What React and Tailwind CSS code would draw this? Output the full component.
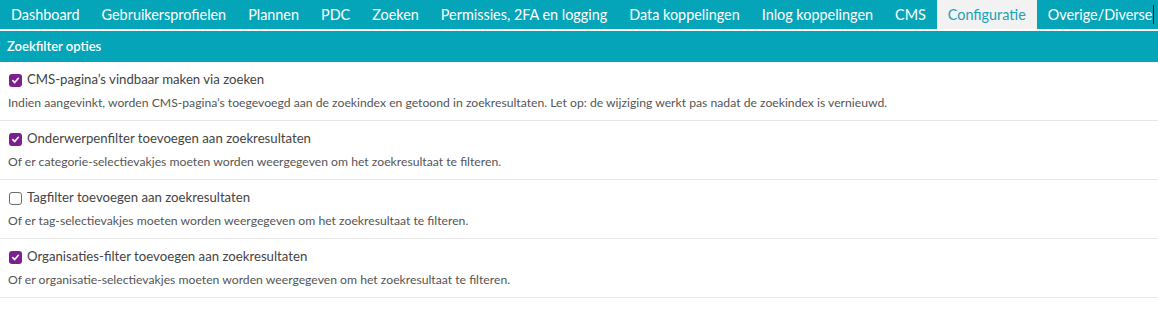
import React, { useState } from "react";

const tabs = [
  "Dashboard",
  "Gebruikersprofielen",
  "Plannen",
  "PDC",
  "Zoeken",
  "Permissies, 2FA en logging",
  "Data koppelingen",
  "Inlog koppelingen",
  "CMS",
  "Configuratie",
  "Overige/Diverse",
];

const options = [
  {
    id: "cms",
    title: "CMS-pagina’s vindbaar maken via zoeken",
    help: "Indien aangevinkt, worden CMS-pagina’s toegevoegd aan de zoekindex en getoond in zoekresultaten. Let op: de wijziging werkt pas nadat de zoekindex is vernieuwd.",
    checked: true,
  },
  {
    id: "subject",
    title: "Onderwerpenfilter toevoegen aan zoekresultaten",
    help: "Of er categorie-selectievakjes moeten worden weergegeven om het zoekresultaat te filteren.",
    checked: true,
  },
  {
    id: "tag",
    title: "Tagfilter toevoegen aan zoekresultaten",
    help: "Of er tag-selectievakjes moeten worden weergegeven om het zoekresultaat te filteren.",
    checked: false,
  },
  {
    id: "org",
    title: "Organisaties-filter toevoegen aan zoekresultaten",
    help: "Of er organisatie-selectievakjes moeten worden weergegeven om het zoekresultaat te filteren.",
    checked: true,
  },
];

function Checkbox({ checked, onChange }) {
  return (
    <button
      type="button"
      onClick={onChange}
      className={`w-[13px] h-[13px] rounded-[3px] flex items-center justify-center shrink-0 ${
        checked ? "bg-[#7d1f8e]" : "bg-white border border-[#6b6b6b]"
      }`}
    >
      {checked && (
        <svg width="9" height="9" viewBox="0 0 10 10">
          <path
            d="M2 5.2 L4.1 7.3 L8.2 2.6"
            fill="none"
            stroke="white"
            strokeWidth="1.8"
            strokeLinecap="round"
            strokeLinejoin="round"
          />
        </svg>
      )}
    </button>
  );
}

export default function App() {
  const [values, setValues] = useState(
    Object.fromEntries(options.map((o) => [o.id, o.checked]))
  );

  return (
    <div
      className="w-[1158px] h-[318px] overflow-hidden bg-white"
      style={{ fontFamily: "Lato, 'Open Sans', sans-serif" }}
    >
      {/* Tabs */}
      <div className="flex h-[29px] bg-[#05a5b9]">
        {tabs.map((t) => {
          const active = t === "Configuratie";
          return (
            <div
              key={t}
              className={`px-[11px] flex items-center text-[14.4px] whitespace-nowrap ${
                active ? "bg-[#f2f2f2] text-[#1aa3b5]" : "text-white"
              }`}
            >
              {t}
              {t === "Overige/Diverse" && (
                <span className="w-px h-[19px] bg-[#0b2b30] ml-px" />
              )}
            </div>
          );
        })}
      </div>
      <div className="h-[2px] bg-white" />

      {/* Section header */}
      <div className="h-[31px] bg-[#05a5b9] flex items-center px-[7px] text-[13px] font-semibold text-white">
        Zoekfilter opties
      </div>

      {/* Options */}
      <div>
        {options.map((o) => (
          <div key={o.id} className="border-b border-[#e6e6e6] h-[59px] pt-[9px] px-[9px]">
            <div className="flex items-center gap-[5px] h-[18px]">
              <Checkbox
                checked={values[o.id]}
                onChange={() => setValues({ ...values, [o.id]: !values[o.id] })}
              />
              <span className="text-[13.2px] text-[#444]">{o.title}</span>
            </div>
            <p className="mt-[5px] text-[12.2px] text-[#555] leading-[18px] -ml-px">
              {o.help}
            </p>
          </div>
        ))}
      </div>
    </div>
  );
}
